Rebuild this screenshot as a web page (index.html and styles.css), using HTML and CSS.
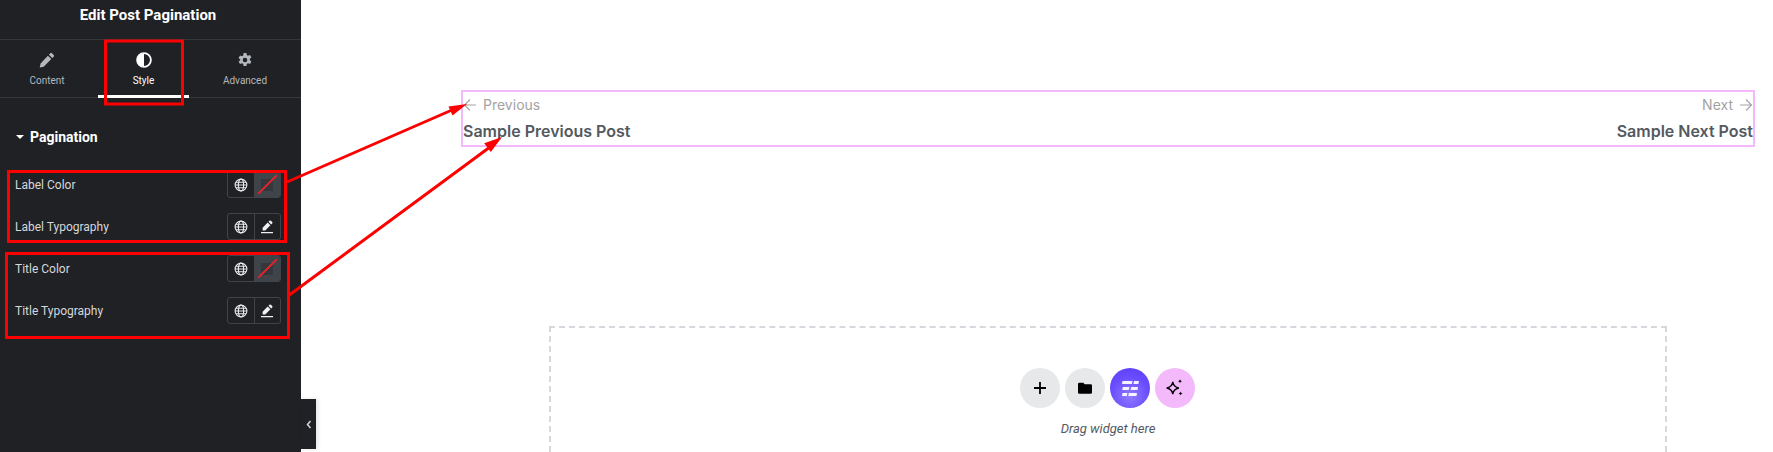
FILE: index.html
```html
<!DOCTYPE html>
<html lang="en">
<head>
  <meta charset="UTF-8" />
  <title>Edit Post Pagination</title>
  <link rel="stylesheet" href="styles.css">
</head>
<body>

  <aside class="panel">
    <header class="panel-title">Edit Post Pagination</header>

    <nav class="tabs">
      <div class="tab first">
        <svg class="tab-icon" viewBox="0 0 16 16"><path fill="#b4b8bd" d="M11.300 1.300a1.200 1.200 0 0 1 1.700 0l1.700 1.700a1.200 1.200 0 0 1 0 1.700l-1.400 1.400-3.400-3.400zM8.900 3.700l3.400 3.400-7.600 7.600-4 .9.9-4z"/></svg>
        <span>Content</span>
      </div>
      <div class="tab active">
        <svg class="tab-icon" viewBox="0 0 16 16"><circle cx="8" cy="8" r="6.900" fill="none" stroke="#fff" stroke-width="1.800"/><path fill="#fff" d="M8 1.500a6.500 6.500 0 0 0 0 13z"/></svg>
        <span>Style</span>
      </div>
      <div class="tab">
        <svg class="tab-icon" viewBox="0 0 16 16"><path fill="#b4b8bd" fill-rule="evenodd" d="M6.600 1h2.800l.4 2 1.200.7 2-.7 1.400 2.400-1.600 1.400v1.400l1.600 1.400-1.400 2.400-2-.7-1.200.7-.4 2H6.600l-.4-2-1.200-.7-2 .7-1.400-2.400 1.600-1.400V7.400L1.600 6l1.400-2.400 2 .7 1.200-.7zM8 5.700a2.300 2.300 0 1 0 0 4.600 2.300 2.300 0 0 0 0-4.600z"/></svg>
        <span>Advanced</span>
      </div>
    </nav>

    <h3 class="section"><i class="caret"></i>Pagination</h3>

    <div class="controls">
      <div class="row">
        <span>Label Color</span>
        <div class="btn-group">
          <div class="cell"><svg class="globe" viewBox="0 0 14 14"><use href="#globe"/></svg></div>
          <div class="cell swatch"><i></i></div>
        </div>
      </div>
      <div class="row">
        <span>Label Typography</span>
        <div class="btn-group">
          <div class="cell"><svg class="globe" viewBox="0 0 14 14"><use href="#globe"/></svg></div>
          <div class="cell"><svg class="globe" viewBox="0 0 14 14"><use href="#edit"/></svg></div>
        </div>
      </div>
      <div class="row">
        <span>Title Color</span>
        <div class="btn-group">
          <div class="cell"><svg class="globe" viewBox="0 0 14 14"><use href="#globe"/></svg></div>
          <div class="cell swatch"><i></i></div>
        </div>
      </div>
      <div class="row">
        <span>Title Typography</span>
        <div class="btn-group">
          <div class="cell"><svg class="globe" viewBox="0 0 14 14"><use href="#globe"/></svg></div>
          <div class="cell"><svg class="globe" viewBox="0 0 14 14"><use href="#edit"/></svg></div>
        </div>
      </div>
    </div>

    <div class="collapse">
      <svg width="6" height="9" viewBox="0 0 6 9"><path d="M4.500 1 1.500 4.500l3 3.500" fill="none" stroke="#d5d8dc" stroke-width="1.500"/></svg>
    </div>
  </aside>

  <main class="canvas">
    <section class="post-nav">
      <div class="post-col">
        <div class="post-label">
          <svg class="arrow" viewBox="0 0 14 14"><path d="M13 7H1.500M7 1.500 1.500 7 7 12.500" fill="none" stroke="currentColor" stroke-width="1.100"/></svg>
          <span>Previous</span>
        </div>
        <div class="post-title">Sample Previous Post</div>
      </div>
      <div class="post-col right">
        <div class="post-label">
          <span>Next</span>
          <svg class="arrow" viewBox="0 0 14 14"><path d="M1 7h11.500M7 1.500 12.500 7 7 12.500" fill="none" stroke="currentColor" stroke-width="1.100"/></svg>
        </div>
        <div class="post-title">Sample Next Post</div>
      </div>
    </section>

    <section class="dropzone">
      <div class="drop-buttons">
        <div class="round grey">
          <svg width="14" height="14" viewBox="0 0 14 14"><path d="M7 1v12M1 7h12" stroke="#000" stroke-width="1.800"/></svg>
        </div>
        <div class="round grey">
          <svg width="16" height="14" viewBox="0 0 16 14"><path d="M1 3a1.300 1.300 0 0 1 1.300-1.300h3.900L7.800 3.300h5.900A1.300 1.300 0 0 1 15 4.600v6.800a1.300 1.300 0 0 1-1.300 1.300H2.300A1.300 1.300 0 0 1 1 11.400z"/></svg>
        </div>
        <div class="round purple">
          <svg width="17" height="15" viewBox="0 0 17 15"><path fill="#fff" opacity=".92" d="M.5 0h10l-.6 3H0zM12 0h5l-.6 3H11.400zM.8 6h6.700l-.8 3H.3zM9.300 6H16l-.5 3H8.500zM.5 12h4.800l-.5 3H0zM6.800 12H15l-.5 3H6.300z"/></svg>
        </div>
        <div class="round pink">
          <svg width="20" height="20" viewBox="0 0 18 18"><path d="M7 3.500c.6 3.400 2 4.900 5.500 5.500-3.500.6-4.900 2-5.500 5.500C6.400 11 5 9.600 1.500 9 5 8.400 6.400 6.900 7 3.500z" fill="none" stroke="#000" stroke-width="1.200"/><path d="M13.500 1c.2 1.300.7 1.800 2 2-1.300.2-1.800.7-2 2-.2-1.300-.7-1.800-2-2 1.300-.2 1.800-.7 2-2zM14 12c.2 1.300.7 1.800 2 2-1.300.2-1.800.7-2 2-.2-1.300-.7-1.800-2-2 1.300-.2 1.800-.7 2-2z"/></svg>
        </div>
      </div>
      <div class="drop-text">Drag widget here</div>
    </section>
  </main>

  <!-- annotations drawn on top of the screenshot -->
  <svg class="notes" width="1773" height="452" viewBox="0 0 1773 452">
    <g fill="none" stroke="#f00" stroke-width="3">
      <rect x="105.500" y="41" width="77" height="63"/>
      <rect x="8.500" y="171.500" width="277" height="70"/>
      <rect x="6.500" y="253.500" width="282" height="84"/>
      <path d="M287 182 452 110M288 296 490 147"/>
    </g>
    <path fill="#f00" d="M467 104 452.500 115.600 448.500 106.400zM502 137 490.800 152.100 484.200 143.300z"/>
  </svg>

  <svg class="defs" width="0" height="0">
    <symbol id="globe" viewBox="0 0 14 14">
      <g fill="none" stroke="#e6e8ea" stroke-width="1.100">
        <circle cx="7" cy="7" r="5.900"/>
        <ellipse cx="7" cy="7" rx="2.600" ry="5.900"/>
        <path d="M1.100 7h11.800M2 4.200h10M2 9.800h10"/>
      </g>
    </symbol>
    <symbol id="edit" viewBox="0 0 14 14">
      <path fill="#f0f1f2" d="M9.500.8a1 1 0 0 1 1.400 0l1.300 1.300a1 1 0 0 1 0 1.400l-1 1-2.700-2.700zM7.700 2.600l2.700 2.700-5.100 5.100H2.600V7.700z"/>
      <path d="M1 12.700h12" stroke="#f0f1f2" stroke-width="1.200"/>
    </symbol>
  </svg>

</body>
</html>
```

FILE: styles.css
```css
* {
  box-sizing: border-box;
}

body {
  margin: 0;
  width: 1773px;
  height: 452px;
  overflow: hidden;
  display: flex;
  font-family: Roboto, sans-serif;
  background: #fff;
  position: relative;
}

.panel {
  width: 301px;
  flex-shrink: 0;
  background: #1f2124;
  color: #d5d8dc;
  position: relative;
}

.panel-title {
  height: 40px;
  padding-top: 7px;
  padding-right: 5px;
  text-align: center;
  color: #fff;
  font-size: 15px;
  line-height: 17px;
  font-weight: 700;
  border-bottom: 1px solid #34383c;
}

.tabs {
  display: grid;
  grid-template-columns: 98px 91px 112px;
  height: 58px;
  border-bottom: 1px solid #34383c;
}

.tab {
  display: flex;
  flex-direction: column;
  align-items: center;
  padding-top: 12px;
  font-size: 10px;
  line-height: 13px;
  color: #b4b8bd;
}

.tab.first {
  padding-right: 4px;
}

.tab.active {
  color: #fff;
  border-bottom: 3px solid #fff;
  height: 58px;
}

.tab-icon {
  width: 16px;
  height: 16px;
  margin-bottom: 6px;
}

.section {
  margin: 0;
  padding: 31px 0 0 16px;
  font-size: 14px;
  line-height: 16px;
  font-weight: 700;
  color: #fff;
  display: flex;
  align-items: center;
}

.caret {
  width: 0;
  height: 0;
  border-left: 4px solid transparent;
  border-right: 4px solid transparent;
  border-top: 4px solid #fff;
  margin-right: 6px;
}

.controls {
  padding: 19px 20px 0 15px;
}

.row {
  height: 42px;
  display: flex;
  align-items: center;
  justify-content: space-between;
  font-size: 12px;
}

.btn-group {
  display: flex;
  width: 54px;
  height: 27px;
  margin-top: -1px;
  border: 1px solid #3f444b;
  border-radius: 3px;
  overflow: hidden;
}

.cell {
  flex: 1;
  display: flex;
  align-items: center;
  justify-content: center;
}

.cell + .cell {
  border-left: 1px solid #3f444b;
}

.globe {
  width: 14px;
  height: 14px;
}

.swatch {
  background: #3f444b;
}

.swatch i {
  width: 19px;
  height: 19px;
  background:
    linear-gradient(to bottom right, transparent 46%, #d0262c 46%, #d0262c 54%, transparent 54%),
    linear-gradient(#34373c, #34373c) center / 12px 12px no-repeat;
}

.collapse {
  position: absolute;
  left: 301px;
  top: 399px;
  width: 15px;
  height: 50px;
  background: #1f2124;
  display: flex;
  align-items: center;
  justify-content: center;
  box-shadow: 2px 0 4px rgba(0, 0, 0, 0.1);
}

.canvas {
  flex: 1;
  padding: 90px 18px 0 160px;
}

.post-nav {
  height: 57px;
  border: 2px solid #f3b9fb;
  display: flex;
  justify-content: space-between;
  font-family: Inter, sans-serif;
}

.post-col.right {
  text-align: right;
}

.post-label {
  display: flex;
  align-items: center;
  gap: 6px;
  font-size: 14px;
  line-height: 17px;
  margin-top: 4px;
  color: #a3a3a3;
}

.post-col.right .post-label {
  justify-content: flex-end;
}

.arrow {
  width: 14px;
  height: 14px;
}

.post-title {
  margin-top: 9px;
  font-size: 16px;
  line-height: 19px;
  font-weight: 600;
  color: #54595f;
}

.dropzone {
  width: 1118px;
  height: 126px;
  margin: 179px 0 0 88px;
  border: 2px dashed #d5d8dc;
  border-bottom: none;
  padding-top: 40px;
  display: flex;
  flex-direction: column;
  align-items: center;
}

.drop-buttons {
  display: flex;
  gap: 5px;
  margin-right: 1px;
}

.round {
  width: 40px;
  height: 40px;
  border-radius: 50%;
  display: flex;
  align-items: center;
  justify-content: center;
}

.grey {
  background: #e6e8ea;
}

.purple {
  background: radial-gradient(circle at 50% 70%, #8f7bff 0, #6a4dff 55%, #5a3bf5 100%);
}

.pink {
  background: #f3b9fb;
}

.drop-text {
  margin-top: 13px;
  font-size: 13px;
  line-height: 15px;
  font-style: italic;
  color: #54595f;
}

.notes {
  position: absolute;
  left: 0;
  top: 0;
  pointer-events: none;
}

.defs {
  position: absolute;
}
```
